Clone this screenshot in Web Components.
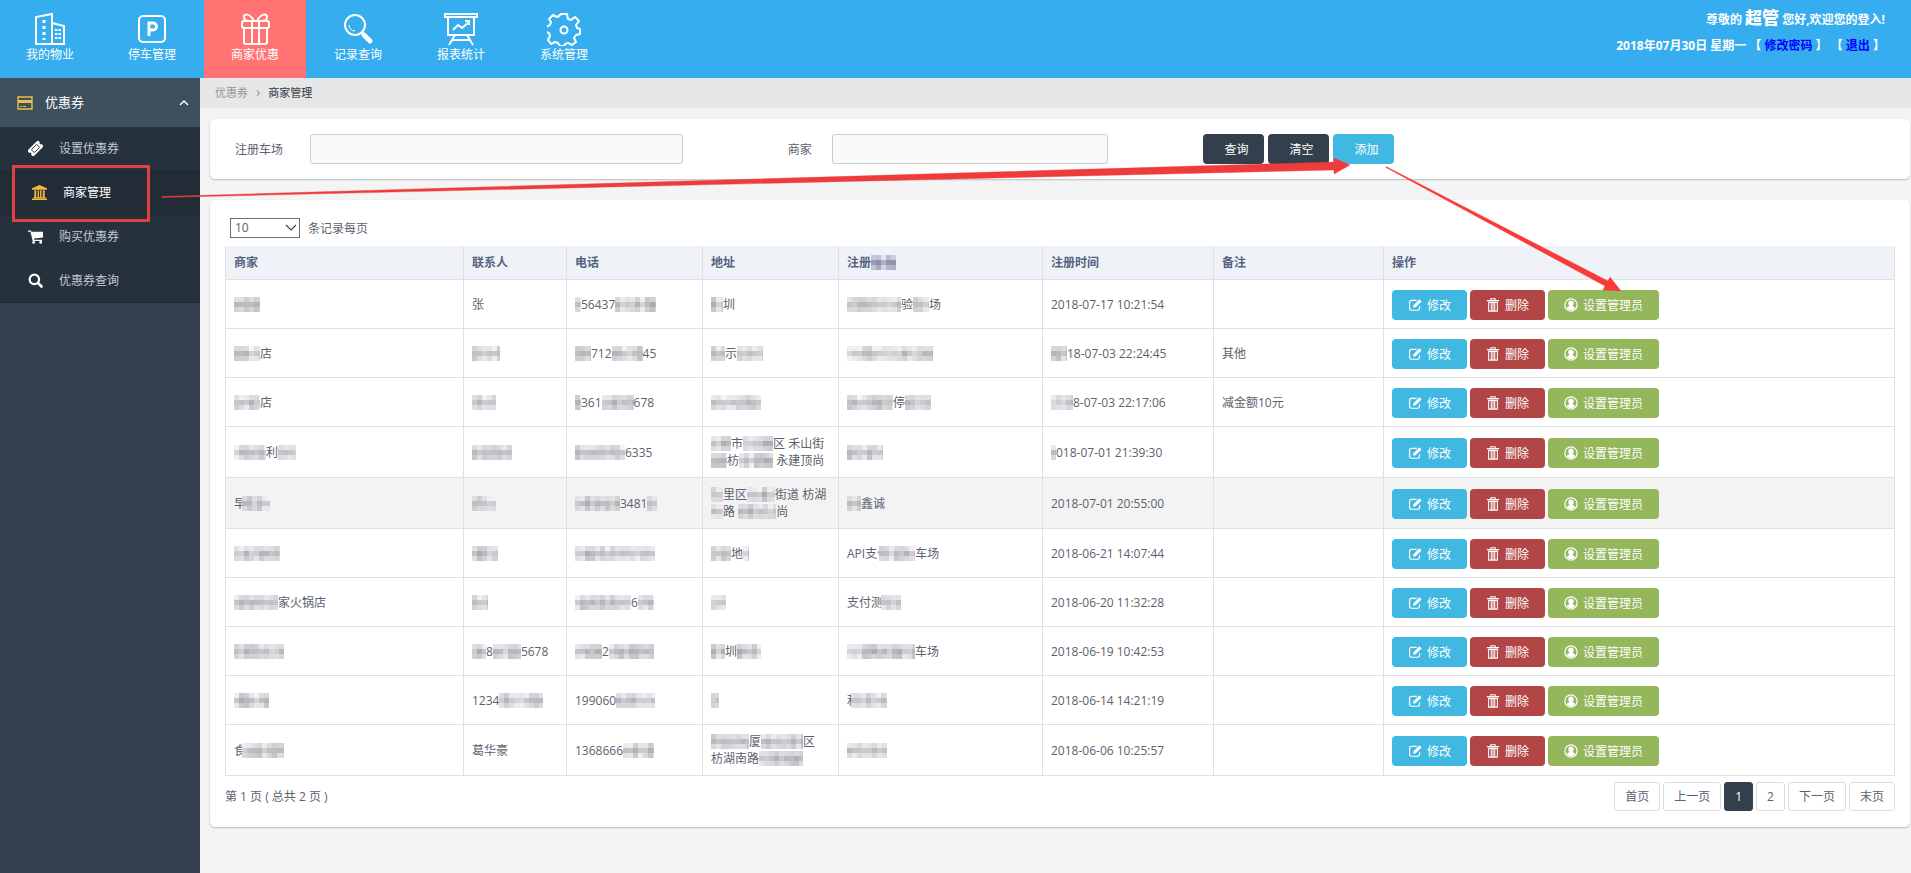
<!DOCTYPE html>
<html lang="zh-CN">
<head>
<meta charset="utf-8">
<title>商家管理</title>
<style>
  html { height: 100%; }
  body {
    margin: 0; min-height: 100%; display: flex; flex-direction: column; position: relative;
    background: #f4f4f4; color: #5a626e;
    font: 12px/17px "Open Sans", "Noto Sans", "Noto Sans CJK SC", sans-serif;
  }
  .workspace { display: flex; flex: 1; }
  main { flex: 1; min-width: 0; }
</style>
</head>
<body>
<app-header>
  <nav-tab icon="building" first>我的物业</nav-tab>
  <nav-tab icon="parking">停车管理</nav-tab>
  <nav-tab icon="gift" active>商家优惠</nav-tab>
  <nav-tab icon="lens">记录查询</nav-tab>
  <nav-tab icon="board">报表统计</nav-tab>
  <nav-tab icon="gear">系统管理</nav-tab>
</app-header>
<div class="workspace">
  <side-menu heading="优惠券">
    <side-item icon="ticket">设置优惠券</side-item>
    <side-item icon="bank" active>商家管理</side-item>
    <side-item icon="cart">购买优惠券</side-item>
    <side-item icon="search">优惠券查询</side-item>
  </side-menu>
  <main>
    <crumb-trail></crumb-trail>
    <panel-card><filter-form></filter-form></panel-card>
    <panel-card><merchant-list></merchant-list></panel-card>
  </main>
</div>
<guide-overlay></guide-overlay>

<script>
const ICONS = {
  building: ['0 0 34 34', '<g fill="none" stroke="#fff" stroke-width="2"><path d="M3 32V5l16-3v30zM19 11l12 3v18H19M2 32h30"/><path d="M11 8v20" stroke-width="3" stroke-dasharray="3 3"/><path d="M25 17v12" stroke-width="6" stroke-dasharray="2 2"/></g><path d="M24.500 16h1v14h-1z" fill="#36adee"/>'],
  parking: ['0 0 34 34', '<rect x="4" y="4" width="26" height="26" rx="4" fill="none" stroke="#fff" stroke-width="2"/><path d="M14 24V11h4a3.500 3.500 0 0 1 0 7h-4" fill="none" stroke="#fff" stroke-width="3"/>'],
  gift: ['0 0 34 34', '<g fill="none" stroke="#fff" stroke-width="2"><rect x="4" y="9" width="27" height="7" rx="2"/><path d="M6 16v14q0 2 2 2h19q2 0 2-2V16M14 9v23M21 9v23M16 9C12 1 5 1 6 6q1 3 5 3M19 9c4-8 11-8 10-3q-1 3-5 3"/></g>'],
  lens: ['0 0 34 34', '<g fill="none" stroke="#fff"><circle cx="14" cy="13" r="10" stroke-width="2"/><path d="M8 13a6 6 0 0 0 6 6" stroke-width="1"/><path d="M20 21l2-1" stroke-width="2"/><path d="M23 23l6 6" stroke-width="5" stroke-linecap="round"/></g>'],
  board: ['0 0 34 34', '<g fill="none" stroke="#fff" stroke-width="2"><path d="M1 5V2h32v3zM4 5v18h26V5M11 23l-6 10M23 23l6 10M8 28h18"/><path d="M9 18l5-5 4 3 7-6M21 9h4v4"/></g>'],
  gear: ['0 0 34 34', '<g fill="none" stroke="#fff" stroke-width="2" stroke-linejoin="round"><path d="M14 2h6l1 5 3 1 4-3 4 4-3 4 1 3 3 1v5l-4 1-2 3 2 4-4 3-4-2-3 1-1 2h-4l-2-3-3-1-4 2-3-4 2-4-1-3-3-1v-5l4-2 1-3-2-3 4-4 4 2 2-1z"/><circle cx="17" cy="18" r="3.500"/></g>'],
  card: ['0 0 16 14', '<path d="M1 1h14v12H1z" fill="none" stroke="#e8c14a" stroke-width="1.400"/><path d="M1 4h14v3H1zM3 10h2v1H3zM6 10h3v1H6z" fill="#e8c14a"/>'],
  ticket: ['0 0 16 16', '<g transform="rotate(-45 8 8)"><path d="M0 3.500h16v3.200a1.300 1.300 0 0 0 0 2.600v3.200H0V9.300a1.300 1.300 0 0 0 0-2.600z" fill="#fff"/><path d="M4 5.800h8v4.400H4z" fill="none" stroke="#25323d" stroke-width="1"/></g>'],
  bank: ['0 0 16 16', '<path d="M8 0l8 3.500V5H0V3.500zM1.500 13h13v1h-13zM0 14.500h16V16H0zM2.500 5.500h2V13h-2zM6 5.500h1.500V13H6zM8.600 5.500h1.500V13H8.600zM11.500 5.500h2V13h-2z" fill="#f0b93a"/>'],
  cart: ['0 0 16 16', '<path d="M0 1.500h3.200l.5 1.500H16v6l-9.600 1.200.2 1.300H15v1.200H5L2.600 2.900H0z" fill="#fff"/><circle cx="6" cy="14.300" r="1.500" fill="#fff"/><circle cx="13.500" cy="14.300" r="1.500" fill="#fff"/>'],
  search: ['0 0 16 16', '<circle cx="6.800" cy="6.800" r="5" fill="none" stroke="#fff" stroke-width="2.400"/><path d="M10.800 10.800l3.600 3.600" stroke="#fff" stroke-width="2.800" stroke-linecap="round"/>'],
  up: ['0 0 10 8', '<path d="M1 6l4-4 4 4" fill="none" stroke="#fff" stroke-width="1.500"/>'],
  down: ['0 0 12 8', '<path d="M1 1l5 5 5-5" fill="none" stroke="#444" stroke-width="1.200"/>'],
  edit: ['0 0 16 16', '<path d="M10 2.700H4q-2.200 0-2.200 2.200V12q0 2 2.200 2h7q2.200 0 2.200-2V9.500" fill="none" stroke="#fff" stroke-width="1.400"/><path d="M5.800 11.200l.6-3L13 1.500l2.500 2.400-6.800 6.800z" fill="#fff"/>'],
  trash: ['0 0 14 16', '<g fill="none" stroke="#fff" stroke-width="1.200"><path d="M0 3h14M4.500 3V.8h5V3M2 5v10h10V5zM5 5v10M7 5v10M9 5v10"/></g>'],
  person: ['0 0 16 16', '<circle cx="8" cy="8" r="7" fill="none" stroke="#fff" stroke-width="1.400"/><path d="M8 2.800c4 0 3.600 4.700 1.800 6 .2 1 2.600 1 3 2.600A6 6 0 0 1 8 14a6 6 0 0 1-4.800-2.600c.4-1.600 2.800-1.600 3-2.600C4.400 7.500 4 2.800 8 2.800z" fill="#fff"/>'],
};

function define(name, render) {
  customElements.define(name, class extends HTMLElement {
    connectedCallback() {
      if (this.shadowRoot) return;
      const template = document.createElement('template');
      template.innerHTML = render(this);
      this.attachShadow({ mode: 'open' }).append(template.content.cloneNode(true));
    }
  });
}

define('ui-icon', el => {
  const [box, body] = ICONS[el.getAttribute('name')];
  return `<style>:host{display:inline-block;width:14px;height:14px;flex:none}svg{display:block;width:100%;height:100%}</style>
  <svg viewBox="${box}" aria-hidden="true">${body}</svg>`;
});

define('app-header', () => `<style>
  :host{display:flex;justify-content:space-between;height:78px;background:#36adee;color:#fff}
  nav{display:flex;gap:1px}
  .user{padding:6px 26px 0 0;text-align:right;font-weight:700}
  p{margin:0;line-height:24px}
  p + p{margin-top:2px}
  strong{font-size:17px}
  a{color:#00f;text-decoration:none}
  </style>
  <nav><slot></slot></nav>
  <div class="user"><p>尊敬的 <strong>超管</strong> 您好,欢迎您的登入!</p>
  <p>2018年07月30日 星期一 【 <a href="#password">修改密码</a> 】 【 <a href="#logout">退出</a> 】</p></div>`);

define('nav-tab', el => `<style>
  :host{display:block;width:102px}
  :host([first]){width:100px}
  :host([active]){background:#ff7373}
  a{display:flex;flex-direction:column;align-items:center;height:100%;padding-top:12px;box-sizing:border-box;color:#fff;text-decoration:none}
  ui-icon{width:34px;height:34px}
  </style><a href="#${el.getAttribute('icon')}"><ui-icon name="${el.getAttribute('icon')}"></ui-icon><slot></slot></a>`);

define('side-menu', el => `<style>
  :host{display:block;width:200px;flex:none;background:#333f4c}
  button{display:flex;align-items:center;width:100%;height:49px;border:0;padding:0 11px 0 17px;background:#3e4f5d;color:#fff;font:inherit;font-size:13px;text-align:left}
  button span{flex:1;padding-left:12px}
  ui-icon{width:16px}
  .up{width:10px;height:8px}
  nav{background:#25323d}
  </style><button type="button" aria-expanded="true"><ui-icon name="card"></ui-icon><span>${el.getAttribute('heading')}</span><ui-icon class="up" name="up"></ui-icon></button>
  <nav><slot></slot></nav>`);

define('side-item', el => `<style>
  :host{display:block}
  a{display:flex;align-items:center;gap:16px;height:44px;box-sizing:border-box;padding-left:28px;border-bottom:1px solid #202c36;color:#c3c8cd;text-decoration:none}
  :host([active]) a{padding-left:32px;background:#212c37;color:#fff}
  ui-icon{width:15px;height:15px}
  </style><a href="#${el.getAttribute('icon')}"><ui-icon name="${el.getAttribute('icon')}"></ui-icon><slot></slot></a>`);

define('crumb-trail', () => `<style>
  :host{display:block;background:#e7e7e7;font-size:11px}
  ol{display:flex;margin:0;padding:0 15px;list-style:none;line-height:30px}
  a{color:#8f959c;text-decoration:none}
  li + li::before{content:"›";padding:0 8px;color:#8f959c;font-size:14px;line-height:1}
  li + li{color:#4c535c;font-weight:500}
  </style><nav aria-label="位置"><ol><li><a href="#coupon">优惠券</a></li><li>商家管理</li></ol></nav>`);

define('panel-card', () => `<style>
  :host{display:block;margin:11px 1px 21px 10px;background:#fff;border-radius:5px;box-shadow:0 1px 2px #bbb}
  </style><slot></slot>`);

define('filter-form', () => `<style>
  form{display:grid;grid-template-columns:75px 373fr 149px 277fr 95px auto 516fr;align-items:center;padding:15px 0 15px 25px}
  .second{padding-left:105px}
  input{height:30px;width:100%;box-sizing:border-box;border:1px solid #ccc;border-radius:3px;background:#f9f9f9;font:inherit;padding:0 8px}
  .buttons{grid-column:6;display:flex;gap:4px}
  button{width:61px;height:30px;border:0;border-radius:4px;background:#333f4c;color:#fff;font:inherit;padding:0 16px 0 21px;white-space:nowrap}
  .add{background:#41b8e1}
  </style><form>
  <label for="park">注册车场</label><input id="park" type="text">
  <label for="shop" class="second">商家</label><input id="shop" type="text">
  <div class="buttons"><button type="button">查询</button><button type="reset">清空</button><button type="button" class="add">添加</button></div></form>`);

/* Pixelated patch that hides private data; tones come from a seeded sequence. */
let patchCount = 0;
define('mosaic-patch', el => {
  const width = +el.getAttribute('width');
  let seed = ++patchCount * 7919 + width * 131;
  const next = () => (seed = (seed * 16807) % 2147483647) / 2147483647;
  next();
  const base = el.hasAttribute('dark') ? [205, 165, 190] : [222, 194, 216];
  let cells = '';
  for (let x = 0; x < width; x += 5) {
    const column = (next() - 0.5) * 30;
    for (let r = 0; r < 3; r++) {
      const tone = Math.round(base[r] + column + (next() - 0.5) * 20);
      const tint = el.hasAttribute('dark') ? 20 : 4;
      cells += `<rect x="${x}" y="${r * 5}" width="5" height="5" fill="rgb(${tone},${tone},${Math.min(255, tone + tint)})"/>`;
    }
  }
  return `<style>:host{display:inline-block;vertical-align:-3px;position:relative;width:${width}px;height:15px;
    margin-left:-${el.getAttribute('before') || 0}px;margin-right:-${el.getAttribute('after') || 0}px}
    svg{display:block;overflow:hidden}</style>
    <svg width="${width}" height="15" shape-rendering="crispEdges" aria-hidden="true">${cells}</svg>`;
});

define('action-button', el => `<style>
  :host{display:block}
  button{display:flex;align-items:center;gap:5px;height:30px;padding:0 16px;border:0;border-radius:4px;color:#fff;background:#41b8e1;font:inherit;white-space:nowrap}
  :host([tone=delete]) button{background:#b24646}
  :host([tone=admin]) button{background:#94b75c}
  </style><button type="button"><ui-icon name="${el.getAttribute('icon')}"></ui-icon><slot></slot></button>`);

/* {width,before,after} stands for a mosaic patch; before/after overlap its neighbours. | breaks the line. */
const ROWS = [
  ['{26}', '张', '{6}56437{41}', '{12}圳', '{54}验{16}场', '2018-07-17 10:21:54', ''],
  ['{26}店', '{28}', '{16}712{31}45', '{14}示{26}', '{86}', '{16}18-07-03 22:24:45', '其他'],
  ['{26}店', '{24}', '{6}361{32}678', '{50}', '{46}停{26}', '{22}8-07-03 22:17:06', '减金额10元'],
  ['{32}利{18}', '{40}', '{50}6335', '{20}市{30}区 禾山街|{16}枋{34} 永建顶尚', '{36}', '{5}018-07-01 21:39:30', ''],
  ['早{28,4}', '{24}', '{45}3481{10}', '{12}里区{28}街道 枋湖|{12}路 {38}尚', '{14}鑫诚', '2018-07-01 20:55:00', ''],
  ['{46}', '{26}', '{80}', '{20}地{6}', 'API支付{36,10}车场', '2018-06-21 14:07:44', ''],
  ['{44}家火锅店', '{16}', '{56}6{16}', '{15}', '支付测{20,2}', '2018-06-20 11:32:28', ''],
  ['{50}', '{14}8{28}5678', '{27}2{45}', '{14}圳{24}', '{68}车场', '2018-06-19 10:42:53', ''],
  ['{35}', '1234{44}', '199060{39}', '{8}', '利{36,8}', '2018-06-14 14:21:19', ''],
  ['食{42,4}', '葛华豪', '1368666{31}', '{38}厦{42}区|枋湖南路{44}', '{40}', '2018-06-06 10:25:57', ''],
];
const cell = text => text
  .replace(/\{(\d+)(?:,(\d+))?(?:,(\d+))?\}/g, (m, w, b = 0, a = 0) => `<mosaic-patch width="${w}" before="${b}" after="${a}"></mosaic-patch>`)
  .replace('|', '<br>');
const ACTIONS = `<div class="actions"><action-button icon="edit">修改</action-button><action-button tone="delete" icon="trash">删除</action-button><action-button tone="admin" icon="person">设置管理员</action-button></div>`;

define('merchant-list', () => `<style>
  :host{display:block;padding:18px 15px 16px}
  .size{display:flex;align-items:center;gap:8px;height:20px;margin:0 5px 8px}
  .pick{position:relative;width:70px}
  select{appearance:none;display:block;width:100%;height:20px;box-sizing:border-box;border:1px solid #707070;border-radius:0;background:#fff;color:inherit;font:inherit;line-height:16px;padding:0 4px}
  .pick ui-icon{position:absolute;right:3px;top:6px;width:12px;height:8px;pointer-events:none}
  table{width:100%;table-layout:fixed;border-collapse:collapse}
  th,td{border:1px solid #dfe0e2;padding:8px;text-align:left;vertical-align:middle}
  th{background:#eff3f8;color:#55637f;font-weight:600;border-top:0}
  td{height:32px;white-space:nowrap}
  tr.hover{background:#f3f3f3}
  .actions{display:flex;gap:3px;padding-top:2px}
  footer{display:flex;justify-content:space-between;align-items:center;padding-top:6px}
  </style>
  <div class="size"><span class="pick"><select id="size"><option>10</option></select><ui-icon name="down"></ui-icon></span><label for="size">条记录每页</label></div>
  <table>
    <colgroup><col width="238"><col width="103"><col width="136"><col width="136"><col width="204"><col width="171"><col width="170"><col></colgroup>
    <thead><tr><th>商家</th><th>联系人</th><th>电话</th><th>地址</th><th>注册<mosaic-patch width="25" dark></mosaic-patch></th><th>注册时间</th><th>备注</th><th>操作</th></tr></thead>
    <tbody>${ROWS.map((row, i) => `<tr${i === 4 ? ' class="hover"' : ''}>${row.map(t => `<td>${cell(t)}</td>`).join('')}<td>${ACTIONS}</td></tr>`).join('')}</tbody>
  </table>
  <footer><span>第 1 页 ( 总共 2 页 )</span><page-links></page-links></footer>`);

define('page-links', () => `<style>
  nav{display:flex;gap:3px}
  a{height:27px;line-height:27px;padding:0 10px;border:1px solid #ddd;border-radius:3px;color:inherit;text-decoration:none}
  a[aria-current]{background:#333f4c;border-color:#333f4c;color:#fff}
  </style><nav aria-label="分页"><a href="#p1">首页</a><a href="#prev">上一页</a><a href="#p1" aria-current="page">1</a><a href="#p2">2</a><a href="#next">下一页</a><a href="#last">末页</a></nav>`);

define('guide-overlay', () => `<style>
  :host{position:absolute;inset:0;overflow:hidden;pointer-events:none}
  svg{display:block;width:100%;height:100%}
  </style><svg aria-hidden="true">
  <rect x="13.500" y="166.500" width="135" height="54" fill="none" stroke="#e23f43" stroke-width="3"/>
  <path d="M162 196.500L1334 162V158L1350 165 1334 174V170L162 197.500Z" fill="#ee3c3c" stroke="#ee3c3c" stroke-width=".4"/>
  <path d="M1386 166.500L1608 281 1610 277 1621 291 1603 290 1605 286L1386 167.500Z" fill="#f83a38" stroke="#f83a38" stroke-width=".4"/></svg>`);
</script>
</body>
</html>
